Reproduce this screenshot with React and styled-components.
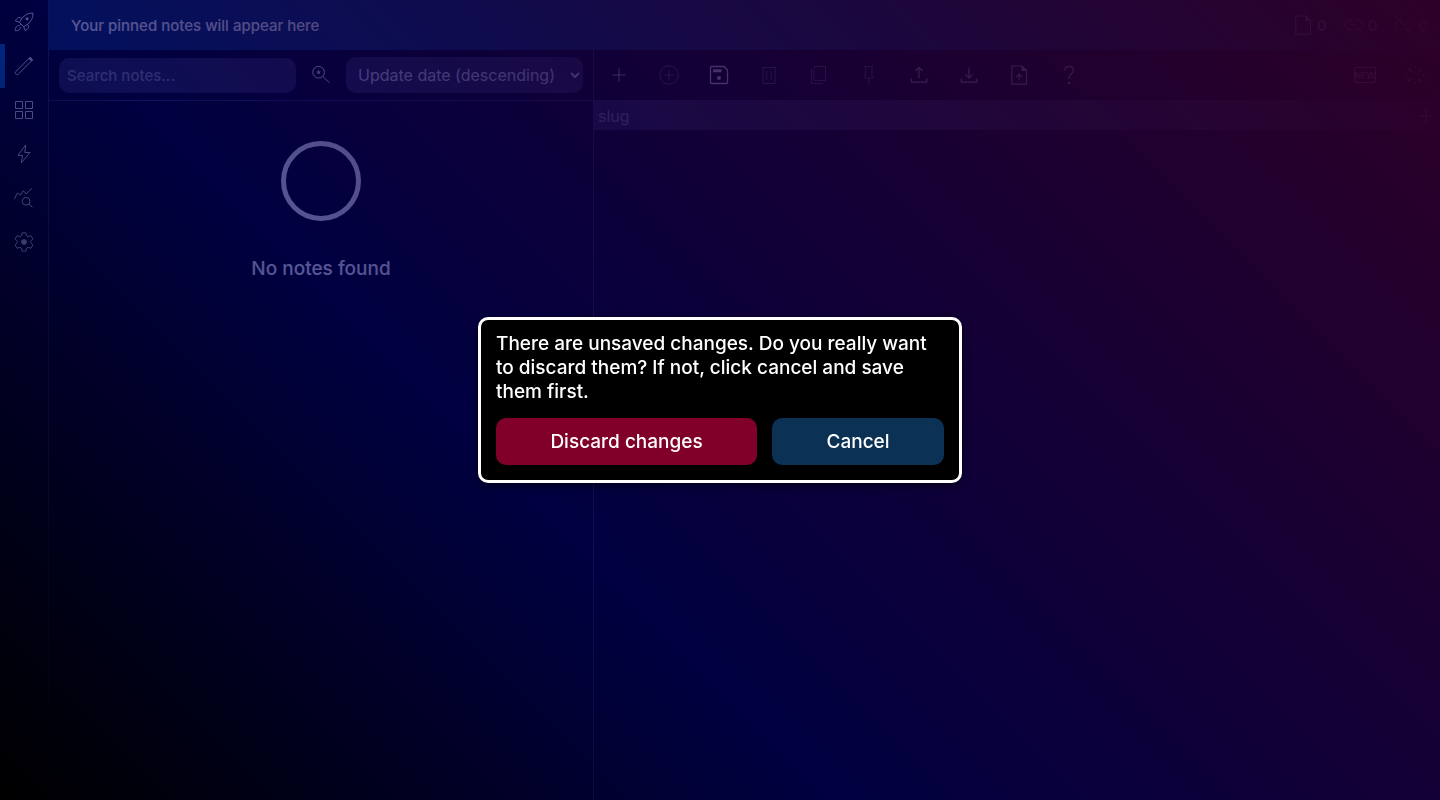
import React from "react";
import styled, { createGlobalStyle } from "styled-components";

const GlobalStyle = createGlobalStyle`
  *, *::before, *::after { box-sizing: border-box; }
  body {
    margin: 0;
    background: #000;
    color: #fff;
    font-family: Inter, "Liberation Sans", sans-serif;
    font-size: 15px;
    font-weight: 500;
  }
  button, input, select { font: inherit; color: inherit; }
`;

const Page = styled.div`
  display: flex;
  min-height: 100vh;
`;

const Sidebar = styled.nav`
  flex: none;
  width: 49px;
  border-right: 1px solid #2d2d4d;
  display: flex;
  flex-direction: column;
`;

const SidebarLink = styled.a`
  display: flex;
  align-items: center;
  justify-content: center;
  height: 44px;
  padding-right: ${(p) => (p.$active ? 5 : 0)}px;
  border-left: ${(p) => (p.$active ? "5px solid #0078d4" : "none")};
  color: #fff;
`;

const Main = styled.main`
  flex: 1;
  min-width: 0;
  display: flex;
  flex-direction: column;
`;

const PinnedBar = styled.header`
  display: flex;
  align-items: center;
  justify-content: space-between;
  height: 50px;
  padding: 0 12px 0 22px;
  background: #0b3155;
`;

const Stats = styled.div`
  display: flex;
  gap: 17px;
`;

const Stat = styled.span`
  display: flex;
  align-items: center;
  gap: 4px;
`;

const Columns = styled.div`
  flex: 1;
  display: grid;
  grid-template-columns: minmax(0, 545fr) minmax(0, 846fr);
`;

const ListColumn = styled.section`
  border-right: 1px solid #2d2d4d;
`;

const EditorColumn = styled.section`
  min-width: 0;
`;

const Toolbar = styled.div`
  display: flex;
  align-items: center;
  height: 51px;
  border-bottom: 1px solid #2d2d4d;
`;

const SearchBar = styled.form`
  display: grid;
  grid-template-columns: minmax(0, 1fr) 50px minmax(0, 1fr);
  align-items: center;
  height: 51px;
  border-bottom: 1px solid #2d2d4d;
  padding: 0 10px;
`;

const SearchInput = styled.input`
  width: 100%;
  height: 35px;
  padding: 0 8px;
  border: 0;
  border-radius: 10px;
  background: #2a2a3c;
  &::placeholder { color: #8a8a9c; opacity: 1; }
`;

const SortSelect = styled.select`
  width: 100%;
  height: 36px;
  padding: 0 0 0 8px;
  border: 0;
  border-radius: 10px;
  background: #2a2a3c;
  color: #d6d6e0;
  font-size: 16px;
  font-weight: 400;
`;

const IconButton = styled.button`
  flex: none;
  display: flex;
  align-items: center;
  justify-content: center;
  width: 50px;
  height: 50px;
  padding: 0;
  border: 0;
  background: none;
  opacity: ${(p) => (p.$strong ? 1 : p.disabled ? 0.4 : 0.8)};
`;

const ToolbarStatus = styled.div`
  flex: none;
  display: flex;
  align-items: center;
  justify-content: center;
  width: 50px;
  height: 50px;
`;

const Spacer = styled.div`
  flex: 1;
`;

const EmptyState = styled.div`
  display: flex;
  flex-direction: column;
  align-items: center;
  padding-top: 40px;
  gap: 36px;
  font-size: 19px;
  line-height: 24px;
`;

const EmptyCircle = styled.div`
  width: 80px;
  height: 80px;
  border: 5px solid #fff;
  border-radius: 50%;
`;

const PropertyRow = styled.div`
  display: flex;
  align-items: center;
  height: 29px;
  background: #2a2a3c;
`;

const PropertyInput = styled.input`
  flex: 1;
  min-width: 0;
  height: 29px;
  padding: 0 4px;
  border: 0;
  background: none;
  font-size: 16px;
  font-weight: 400;
  &::placeholder { color: #8a8a9c; opacity: 1; }
`;

const AddProperty = styled.button`
  display: flex;
  align-items: center;
  padding: 0 4px;
  border: 0;
  background: none;
`;

const Overlay = styled.div`
  position: fixed;
  inset: 0;
  display: flex;
  align-items: center;
  justify-content: center;
  padding: 16px;
  background: linear-gradient(45deg, rgb(0, 0, 0) 0%, rgba(0, 0, 98, 0.66) 37%, rgba(46, 0, 39, 0.99) 100%);
`;

const Dialog = styled.div`
  width: 484px;
  max-width: 100%;
  padding: 12px 15px 15px;
  border: 3px solid #fff;
  border-radius: 10px;
  background: #000;
  box-shadow: 0 3px 8px rgba(0, 0, 0, 0.5);
`;

const DialogText = styled.p`
  margin: 0 0 14px;
  font-size: 19px;
  line-height: 24px;
`;

const DialogActions = styled.div`
  display: flex;
  gap: 15px;
`;

const DialogButton = styled.button`
  flex: 1 1 auto;
  height: 47px;
  padding: 0 15px;
  border: 0;
  border-radius: 10px;
  background: ${(p) => (p.$danger ? "#800029" : "#0b3155")};
  font-size: 19px;
`;

function gearPath() {
  const points = [];
  for (let i = 0; i < 6; i += 1) {
    const a = (i * Math.PI) / 3;
    [[-2.6, -6.2], [-1.9, -9.2], [1.9, -9.2], [2.6, -6.2]].forEach(([x, y]) => {
      const px = 10 + x * Math.cos(a) - y * Math.sin(a);
      const py = 10 + x * Math.sin(a) + y * Math.cos(a);
      points.push(`${px.toFixed(2)} ${py.toFixed(2)}`);
    });
  }
  return `M${points.join("L")}Z`;
}

const shapes = {
  rocket: (
    <>
      <path d="M19 1.1C14.2.9 10.8 2.8 8 6.3L5.4 10.4 9.7 14.7 13.7 12.1C17.2 9.3 19.1 5.9 19 1.1Z" />
      <path d="M7.8 6.4C5.2 4.7 3 5.6 1.4 9l4 1.2M13.6 12.2c1.7 2.6.8 4.8-2.6 6.4l-1.3-4M5 13.7c-2.4-.3-3.9 1.8-3.8 5.1 3.3.1 5.4-1.4 5.1-3.8M7 12l-1.5 1.6" />
      <circle cx="13.1" cy="6.9" r="1.1" fill="currentColor" />
    </>
  ),
  pencil: (
    <>
      <path d="M1.7 15.7 15.5 1.9l2.5 2.5L4.2 18.2c-1.8 1.4-3.8-.6-2.5-2.500z" strokeLinejoin="round" />
      <path d="m15 2.4 2.500 2.500 1.2-1.2-2.500-2.500z" fill="currentColor" />
    </>
  ),
  grid: <path d="M1.5 1.5h7v7h-7zM11.5 1.5h7v7h-7zM1.5 11.5h7v7h-7zM11.5 11.5h7v7h-7z" strokeLinejoin="round" />,
  bolt: <path d="M11.7 1 3.9 11.4h4.7L7.3 18.9 16 8.5h-5.2z" />,
  stats: (
    <>
      <path d="M.3 11 3.4 5l3 2L9.2 2.6l3 3.3L18 .3M15 16l3.4 3.3" />
      <circle cx="12.1" cy="13.3" r="3.9" />
    </>
  ),
  gear: (
    <>
      <path d={gearPath()} strokeLinejoin="round" />
      <circle cx="10" cy="10" r="2.4" fill="currentColor" />
    </>
  ),
  searchStar: (
    <>
      <circle cx="7.6" cy="7.2" r="5.8" />
      <path d="m11.8 11.4 6.6 6.4" />
      <path d="m7.6 5 .6 1.5 1.6.1-1.2 1 .4 1.6-1.4-.9-1.4.9.4-1.6-1.2-1 1.6-.1z" fill="currentColor" stroke="none" />
    </>
  ),
  plus: <path d="M10 3.5v13M3.5 10h13" />,
  plusCircle: (
    <>
      <circle cx="10" cy="10" r="9.2" />
      <path d="M10 5.3v9.4M5.3 10h9.4" />
    </>
  ),
  save: (
    <>
      <path d="M2.5 1.5H15L18.5 5v12.5a1 1 0 0 1-1 1h-15a1 1 0 0 1-1-1v-15a1 1 0 0 1 1-1z" strokeWidth="1.3" />
      <path d="M4 4.3h8.5v3H4z" fill="currentColor" stroke="none" />
      <circle cx="10" cy="13" r="2" fill="currentColor" stroke="none" />
    </>
  ),
  trash: <path d="M2.7 2.5h14.6M4 2.5v16h12v-16M7.8 6v9M12.2 6v9" />,
  copy: <path d="M5 1.5h11.5v14H5zM2.5 4v14.5H14" />,
  pin: <path d="M5 1.5h9M6.5 1.5v9L5 13h9.5L13 10.5v-9M9.8 13v6" />,
  upload: <path d="M10 13V2.5M6.3 6 10 2.3 13.7 6M2.3 13.5v3.7h15.4v-3.7" strokeWidth="1.2" />,
  download: <path d="M10 2.5V13M6.3 9.3 10 13l3.7-3.7M2.3 13.5v3.7h15.4v-3.7" strokeWidth="1.2" />,
  fileUpload: (
    <>
      <path d="M2.8 1h10.4l4.3 4.3v13.9H2.8zM10.2 15.5V9.3M7.3 12l2.9-2.9 2.9 2.9" strokeWidth="1.2" />
      <path d="M13 1v4.5h4.5z" fill="currentColor" />
    </>
  ),
  help: (
    <>
      <path d="M5.7 5.4C5.7 3 7.4 1.5 10 1.5s4.4 1.5 4.4 3.9c0 3.1-4.4 4.1-4.4 7.3v1.6" strokeWidth="1.3" />
      <circle cx="10" cy="18" r="1.2" fill="currentColor" stroke="none" />
    </>
  ),
  file: (
    <>
      <path d="M2.8 1h10.4l4.3 4.3v13.9H2.8z" />
      <path d="M13 1v4.5h4.5z" fill="currentColor" />
    </>
  ),
  link: <path d="M8.5 5.5h-3a4.5 4.5 0 0 0 0 9h3M11.5 5.5h3a4.5 4.5 0 0 1 0 9h-3M6.5 10h7" />,
  unlink: <path d="M8.5 5.5h-3a4.5 4.5 0 0 0 0 9h3M11.5 5.5h3a4.5 4.5 0 0 1 0 9h-3M1 1l18 18" />,
  spinner: <path d="M10 .8v1.8M10 17.4v1.8M.8 10h1.8M17.4 10h1.8M3.5 3.5l3.2 3.2M13.3 13.3l3.2 3.2M16.5 3.5l-3.2 3.2M6.7 13.3l-3.2 3.2" strokeWidth="1.5" />,
};

function Icon({ name }) {
  return (
    <svg width="20" height="20" viewBox="0 0 20 20" fill="none" stroke="currentColor" strokeWidth="1" aria-hidden="true">
      {shapes[name]}
    </svg>
  );
}

const NewBadge = styled.span`
  display: flex;
  align-items: center;
  justify-content: center;
  width: 22px;
  height: 16px;
  border: 1px solid currentColor;
  border-radius: 2px;
  font-size: 9px;
`;

const navItems = [
  ["rocket", "Start"],
  ["pencil", "Editor"],
  ["grid", "Files"],
  ["bolt", "Quick note"],
  ["stats", "Statistics"],
  ["gear", "Settings"],
];

const tools = [
  { icon: "plus", label: "New note" },
  { icon: "plusCircle", label: "Add to note", disabled: true },
  { icon: "save", label: "Save", strong: true },
  { icon: "trash", label: "Delete", disabled: true },
  { icon: "copy", label: "Duplicate", disabled: true },
  { icon: "pin", label: "Pin", disabled: true },
  { icon: "upload", label: "Upload" },
  { icon: "download", label: "Download" },
  { icon: "fileUpload", label: "Import file" },
  { icon: "help", label: "Help" },
];

export default function App() {
  return (
    <>
      <GlobalStyle />
      <Page>
        <Sidebar>
          {navItems.map(([icon, label]) => (
            <SidebarLink key={icon} href="#" aria-label={label} $active={icon === "pencil"}>
              <Icon name={icon} />
            </SidebarLink>
          ))}
        </Sidebar>
        <Main>
          <PinnedBar>
            <span>Your pinned notes will appear here</span>
            <Stats>
              <Stat><Icon name="file" />0</Stat>
              <Stat><Icon name="link" />0</Stat>
              <Stat><Icon name="unlink" />0</Stat>
            </Stats>
          </PinnedBar>
          <Columns>
            <ListColumn>
              <SearchBar>
                <SearchInput type="search" aria-label="Search notes" placeholder="Search notes..." />
                <IconButton type="button" aria-label="Search options" $strong>
                  <Icon name="searchStar" />
                </IconButton>
                <SortSelect aria-label="Sort notes">
                  <option>Update date (descending)</option>
                </SortSelect>
              </SearchBar>
              <EmptyState>
                <EmptyCircle />
                <span>No notes found</span>
              </EmptyState>
            </ListColumn>
            <EditorColumn>
              <Toolbar>
                {tools.map((t) => (
                  <IconButton key={t.icon} type="button" aria-label={t.label} disabled={t.disabled} $strong={t.strong}>
                    <Icon name={t.icon} />
                  </IconButton>
                ))}
                <Spacer />
                <ToolbarStatus><NewBadge>NEW</NewBadge></ToolbarStatus>
                <ToolbarStatus><Icon name="spinner" /></ToolbarStatus>
              </Toolbar>
              <PropertyRow>
                <PropertyInput aria-label="slug" placeholder="slug" />
                <AddProperty type="button" aria-label="Add property"><Icon name="plus" /></AddProperty>
              </PropertyRow>
            </EditorColumn>
          </Columns>
        </Main>
      </Page>
      <Overlay>
        <Dialog role="dialog" aria-modal="true" aria-labelledby="discard-text">
          <DialogText id="discard-text">
            There are unsaved changes. Do you really want to discard them? If not, click cancel and save them first.
          </DialogText>
          <DialogActions>
            <DialogButton type="button" $danger>Discard changes</DialogButton>
            <DialogButton type="button">Cancel</DialogButton>
          </DialogActions>
        </Dialog>
      </Overlay>
    </>
  );
}
